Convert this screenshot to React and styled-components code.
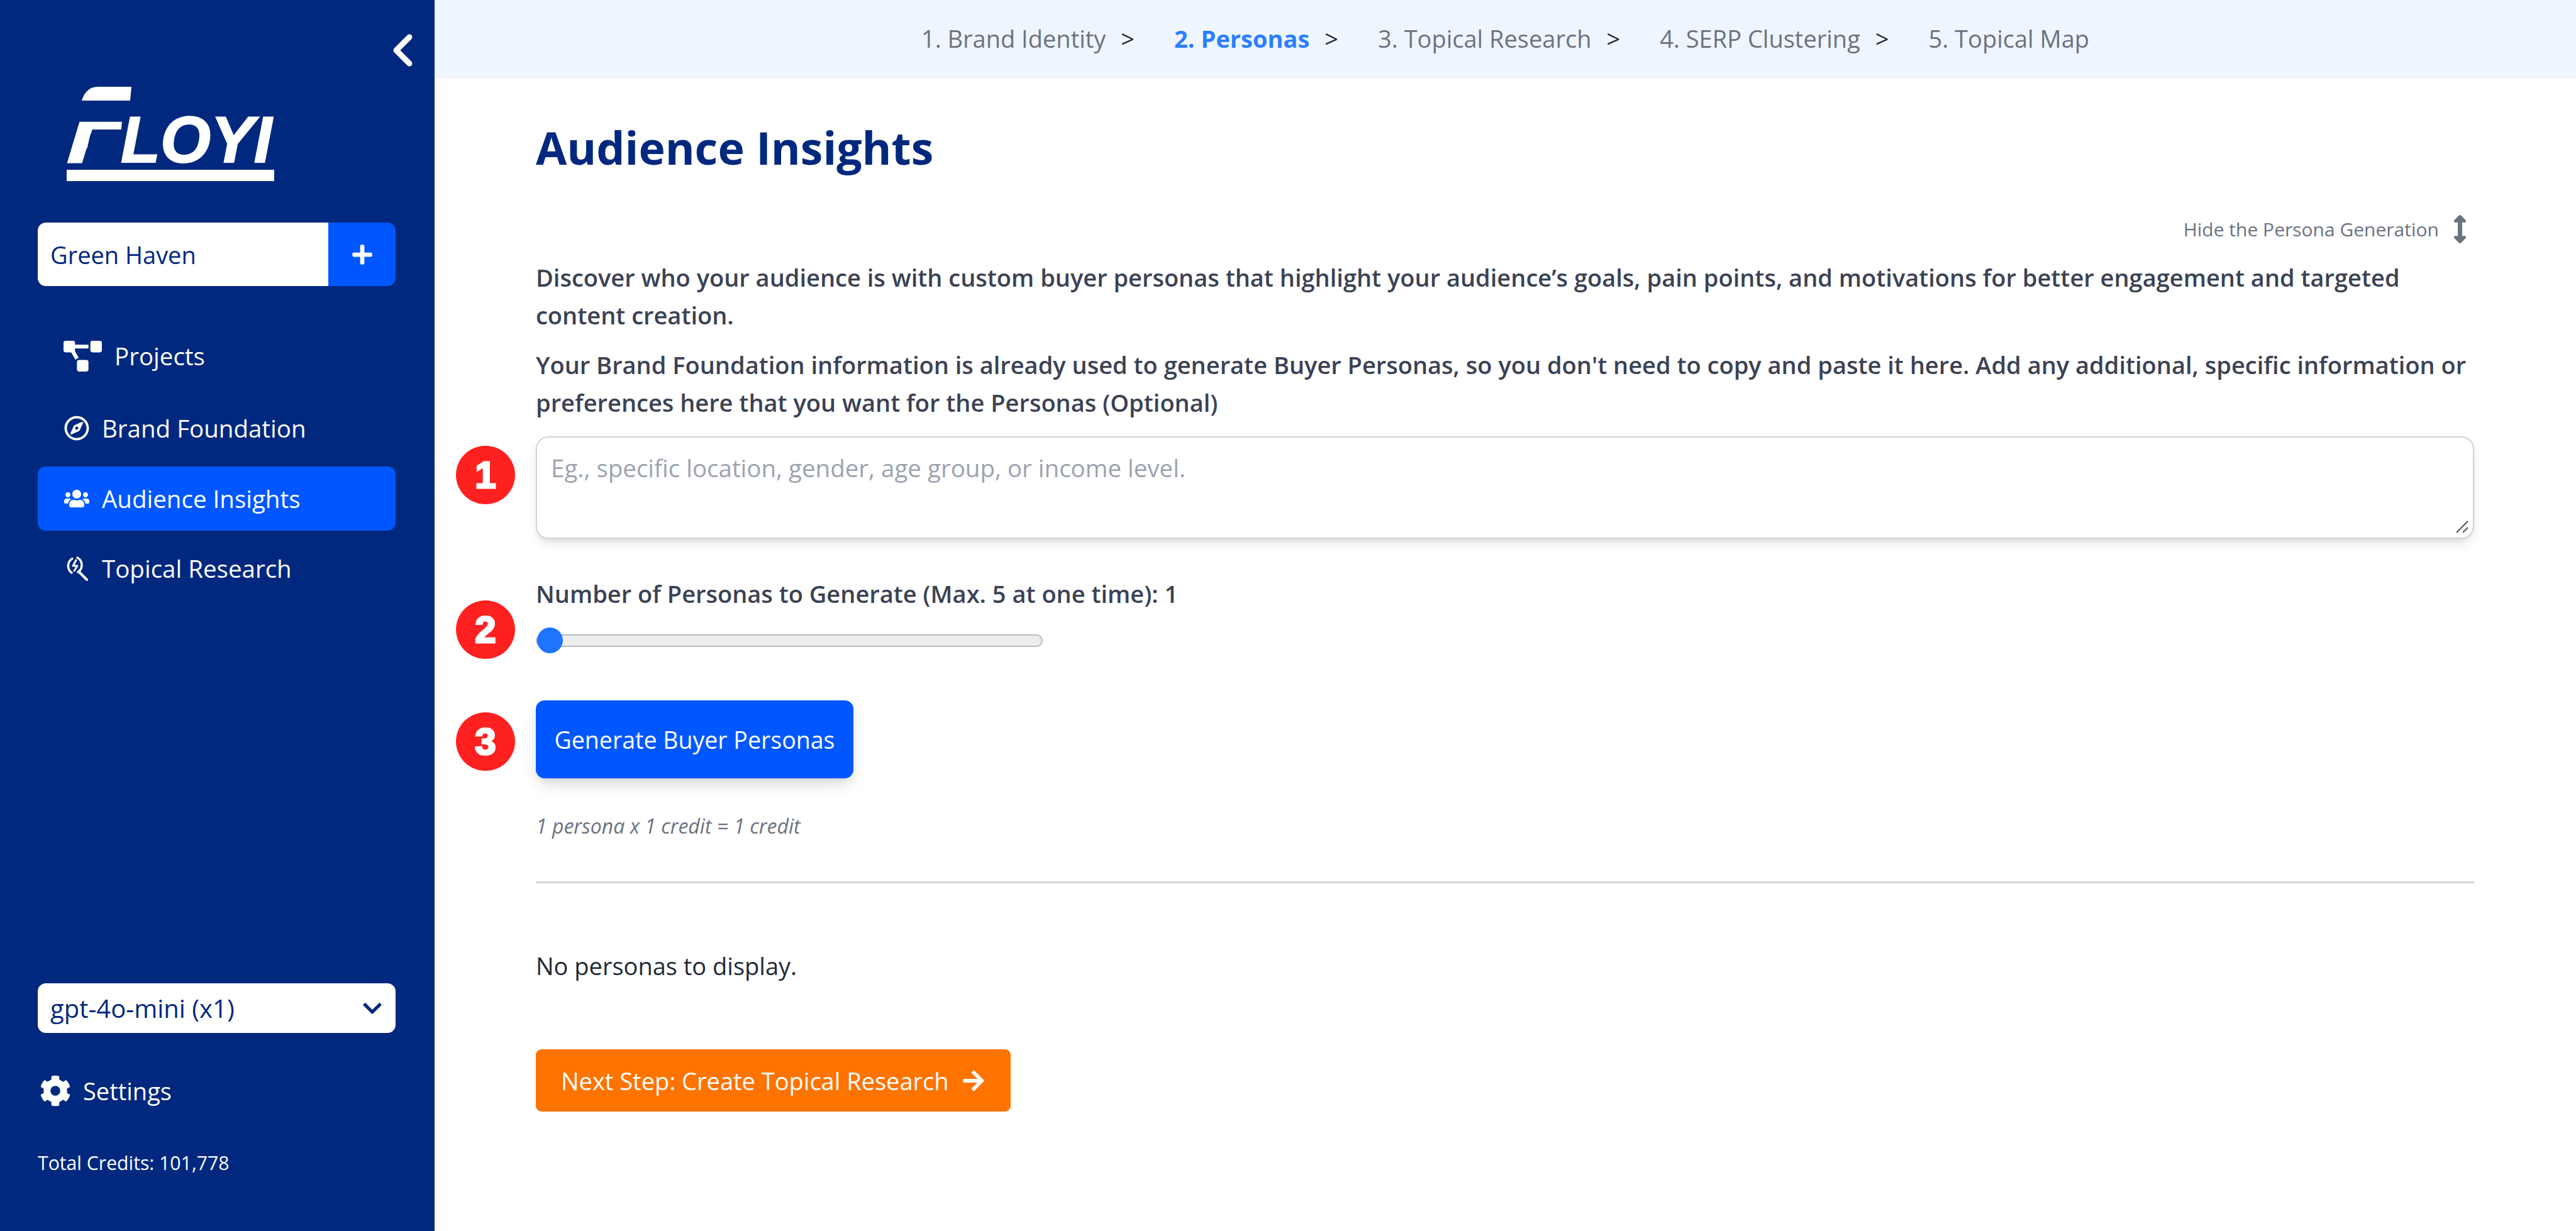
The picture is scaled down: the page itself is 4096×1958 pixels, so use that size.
import React from 'react'
import styled, { createGlobalStyle } from 'styled-components'
import {
  FaPlus, FaProjectDiagram, FaRegCompass, FaUsers, FaCog, FaChevronDown, FaArrowsAltV, FaArrowRight,
} from 'react-icons/fa'

const navy = '#00287f'
const blue = '#0057ff'
const slate = '#3b4254'

const GlobalStyle = createGlobalStyle`
  html, body { margin: 0; padding: 0; background: #fff; }
  body { font-family: "Open Sans", "Noto Sans", sans-serif; }
  * { box-sizing: border-box; }
`

const Page = styled.div`
  display: flex;
  width: 100%;
  height: 100vh;
  overflow: hidden;
`

const Sidebar = styled.aside`
  flex: 0 0 691px;
  display: flex;
  flex-direction: column;
  padding: 54px 62px 88px 60px;
  background: ${navy};
  color: #fff;
`

const Collapse = styled.button`
  align-self: flex-end;
  display: flex;
  width: 32px;
  height: 52px;
  margin-right: -27px;
  padding: 0;
  border: 0;
  background: none;
  color: #fff;
`

const LogoMark = styled.svg`
  display: block;
  width: 330px;
  height: 150px;
  margin: 32px 0 0 46px;
`

const ProjectRow = styled.div`
  display: flex;
  height: 101px;
  margin-top: 66px;
  border-radius: 13px;
  overflow: hidden;
`

const ProjectName = styled.div`
  flex: 1;
  display: flex;
  align-items: center;
  padding-left: 20px;
  background: #fff;
  color: ${navy};
  font-size: 38px;
`

const AddButton = styled.button`
  flex: 0 0 107px;
  display: flex;
  align-items: center;
  justify-content: center;
  border: 0;
  background: ${blue};
  color: #fff;
  font-size: 36px;
`

const NavList = styled.nav`
  display: flex;
  flex-direction: column;
`

const NavItem = styled.a`
  display: flex;
  align-items: center;
  gap: 20px;
  height: 102px;
  margin-top: ${(p) => p.$top}px;
  padding-left: 41px;
  border-radius: 13px;
  background: ${(p) => (p.$active ? blue : 'transparent')};
  color: #fff;
  font-size: 38.5px;
`

const NavIcon = styled.span`
  display: flex;
  align-items: center;
  justify-content: center;
  width: ${(p) => p.$width || 41}px;
  font-size: ${(p) => p.$size || 40}px;
`

const ModelSelect = styled.div`
  display: flex;
  align-items: center;
  justify-content: space-between;
  height: 79px;
  margin-top: auto;
  padding: 0 20px;
  border-radius: 13px;
  background: #fff;
  color: ${navy};
  font-size: 40px;
`

const SettingsRow = styled.a`
  display: flex;
  align-items: center;
  gap: 19px;
  height: 50px;
  margin: 67px 0 0 3px;
  font-size: 38px;
`

const Credits = styled.div`
  height: 40px;
  margin-top: 70px;
  font-size: 30.2px;
  line-height: 40px;
`

const Main = styled.main`
  flex: 1;
  display: flex;
  flex-direction: column;
  min-width: 0;
`

const Steps = styled.header`
  flex: 0 0 125px;
  display: flex;
  align-items: center;
  justify-content: center;
  border-bottom: 4px solid #f3f4f6;
  background: #eff6ff;
  font-size: 38px;
`

const Step = styled.span`
  color: ${(p) => (p.$active ? '#2b7fff' : '#6b7280')};
  font-weight: ${(p) => (p.$active ? 700 : 400)};
`

const StepArrow = styled.span`
  margin: 0 63px 0 24px;
  color: #1f2a44;
`

const Content = styled.section`
  flex: 1;
  padding: 70px 162px 0 161px;
`

const Title = styled.h1`
  margin: 0;
  color: ${navy};
  font-size: 71.5px;
  font-weight: 700;
  line-height: 80px;
`

const HideToggle = styled.div`
  display: flex;
  align-items: center;
  justify-content: flex-end;
  gap: 11px;
  height: 40px;
  margin-top: 69px;
  color: #6b7280;
  font-size: 30px;
`

const Intro = styled.p`
  margin: ${(p) => p.$top}px 0 0;
  color: ${slate};
  font-size: 38px;
  font-weight: 600;
  line-height: 60px;
`

const Annotated = styled.div`
  position: relative;
  margin-top: ${(p) => p.$top}px;
`

const Badge = styled.span`
  position: absolute;
  top: ${(p) => p.$top}px;
  left: -127px;
  display: flex;
  align-items: center;
  justify-content: center;
  width: 94px;
  height: 93px;
  border-radius: 50%;
  background: #ff2020;
  color: #fff;
  font-family: "Liberation Sans", sans-serif;
  font-size: 60px;
  font-weight: 700;
  -webkit-text-stroke: 3px #fff;
`

const PromptBox = styled.textarea`
  display: block;
  width: 100%;
  height: 163px;
  padding: 22px 22px;
  border: 2px solid #d1d5db;
  border-radius: 20px;
  outline: 0;
  resize: none;
  box-shadow: 0 10px 20px -4px rgba(0, 0, 0, 0.12), 0 4px 8px -4px rgba(0, 0, 0, 0.1);
  color: ${slate};
  font-family: inherit;
  font-size: 38.5px;
  line-height: 52px;
  &::placeholder { color: #9ca3af; opacity: 1; }
`

const ResizeGrip = styled.svg`
  position: absolute;
  right: 8px;
  bottom: 8px;
  width: 22px;
  height: 22px;
`

const FieldLabel = styled.label`
  display: block;
  color: ${slate};
  font-size: 38px;
  font-weight: 600;
  line-height: 50px;
`

const CountSlider = styled.input`
  display: block;
  width: 806px;
  height: 41px;
  margin: 29px 0 0;
  appearance: none;
  background: none;
  &::-webkit-slider-runnable-track {
    height: 20px;
    border: 2px solid #b8b8c0;
    border-radius: 10px;
    background: #eceeee;
  }
  &::-webkit-slider-thumb {
    appearance: none;
    width: 41px;
    height: 41px;
    margin-top: -12.5px;
    border-radius: 50%;
    background: #1f74ff;
  }
`

const GenerateButton = styled.button`
  display: block;
  width: 505px;
  height: 124px;
  border: 0;
  border-radius: 14px;
  box-shadow: 0 12px 24px -4px rgba(0, 0, 0, 0.16), 0 4px 10px -4px rgba(0, 0, 0, 0.1);
  background: ${blue};
  color: #fff;
  font-family: inherit;
  font-size: 37.5px;
`

const CostNote = styled.p`
  margin: 54px 0 0;
  color: #6b7280;
  font-size: 32px;
  font-style: italic;
  line-height: 44px;
`

const Divider = styled.hr`
  height: 3px;
  margin: 66px 0 0;
  border: 0;
  background: #d1d5db;
`

const EmptyText = styled.p`
  margin: 101px 0 0;
  color: #1f2937;
  font-size: 38px;
  line-height: 60px;
`

const NextButton = styled.button`
  display: flex;
  align-items: center;
  gap: 20px;
  height: 99px;
  margin-top: 103px;
  padding: 0 40px;
  border: 0;
  border-radius: 9px;
  background: #ff7300;
  color: #fff;
  font-family: inherit;
  font-size: 38px;
  font-weight: 500;
`

function Logo() {
  return (
    <LogoMark viewBox="0 0 330 150" aria-label="Floyi">
      <defs>
        <clipPath id="f-cut">
          <polygon points="0,55 88,55 86,75 38,75 26,125 0,125" />
        </clipPath>
      </defs>
      <path d="M24 22C28 9 36 0 50 0H103L101 22Z" fill="#fff" />
      <text x="0" y="120" clipPath="url(#f-cut)" fill="#fff" stroke="#fff" strokeWidth="2" fontFamily="Liberation Sans" fontStyle="italic" fontWeight="700" fontSize="92" textLength="88" lengthAdjust="spacingAndGlyphs">F</text>
      <text x="86" y="120" fill="#fff" stroke="#fff" strokeWidth="2" fontFamily="Liberation Sans" fontStyle="italic" fontWeight="700" fontSize="103">LOYI</text>
      <rect x="0" y="132" width="330" height="18" fill="#fff" />
    </LogoMark>
  )
}

function TopicalIcon() {
  return (
    <svg width="37" height="40" viewBox="0 0 37 40" fill="none" stroke="#fff" strokeWidth="3.5" strokeLinecap="round" strokeLinejoin="round">
      <path d="M12 4.5A13.5 13.5 0 0 0 11 27" />
      <path d="M20 3A13.5 13.5 0 0 1 21 26" />
      <path d="M18 7l-5 9h7l-5 8" strokeWidth="3" />
      <path d="M23 26l12 12" strokeWidth="4" />
    </svg>
  )
}

export default function App() {
  return (
    <Page>
      <GlobalStyle />
      <Sidebar>
        <Collapse aria-label="Collapse sidebar">
          <svg width="32" height="52" viewBox="0 0 32 52" fill="none" stroke="currentColor" strokeWidth="9" strokeLinecap="round" strokeLinejoin="round">
            <path d="M27 5L6 26l21 21" />
          </svg>
        </Collapse>
        <Logo />
        <ProjectRow>
          <ProjectName>Green Haven</ProjectName>
          <AddButton aria-label="Add project"><FaPlus /></AddButton>
        </ProjectRow>
        <NavList>
          <NavItem $top={60}><NavIcon $width={61} $size={61}><FaProjectDiagram /></NavIcon>Projects</NavItem>
          <NavItem $top={13}><NavIcon><FaRegCompass /></NavIcon>Brand Foundation</NavItem>
          <NavItem $top={10} $active><NavIcon><FaUsers /></NavIcon>Audience Insights</NavItem>
          <NavItem $top={9}><NavIcon><TopicalIcon /></NavIcon>Topical Research</NavItem>
        </NavList>
        <ModelSelect>gpt-4o-mini (x1)<FaChevronDown size={34} /></ModelSelect>
        <SettingsRow><FaCog size={50} />Settings</SettingsRow>
        <Credits>Total Credits: 101,778</Credits>
      </Sidebar>
      <Main>
        <Steps>
          <Step>1. Brand Identity</Step><StepArrow>&gt;</StepArrow>
          <Step $active>2. Personas</Step><StepArrow>&gt;</StepArrow>
          <Step>3. Topical Research</Step><StepArrow>&gt;</StepArrow>
          <Step>4. SERP Clustering</Step><StepArrow>&gt;</StepArrow>
          <Step>5. Topical Map</Step>
        </Steps>
        <Content>
          <Title>Audience Insights</Title>
          <HideToggle>Hide the Persona Generation <FaArrowsAltV size={45} /></HideToggle>
          <Intro $top={27}>Discover who your audience is with custom buyer personas that highlight your audience’s goals, pain points, and motivations for better engagement and targeted content creation.</Intro>
          <Intro $top={19}>Your Brand Foundation information is already used to generate Buyer Personas, so you don't need to copy and paste it here. Add any additional, specific information or preferences here that you want for the Personas (Optional)</Intro>
          <Annotated $top={24}>
            <Badge $top={15}>1</Badge>
            <PromptBox placeholder="Eg., specific location, gender, age group, or income level." />
            <ResizeGrip viewBox="0 0 22 22" fill="none" stroke="#4b5563" strokeWidth="2"><path d="M2 20L20 2M12 20l8-8" /></ResizeGrip>
          </Annotated>
          <Annotated $top={62}>
            <Badge $top={36}>2</Badge>
            <FieldLabel>Number of Personas to Generate (Max. 5 at one time): 1</FieldLabel>
            <CountSlider type="range" min="1" max="5" defaultValue="1" />
          </Annotated>
          <Annotated $top={75}>
            <Badge $top={19}>3</Badge>
            <GenerateButton>Generate Buyer Personas</GenerateButton>
          </Annotated>
          <CostNote>1 persona x 1 credit = 1 credit</CostNote>
          <Divider />
          <EmptyText>No personas to display.</EmptyText>
          <NextButton>Next Step: Create Topical Research <FaArrowRight size={38} /></NextButton>
        </Content>
      </Main>
    </Page>
  )
}
